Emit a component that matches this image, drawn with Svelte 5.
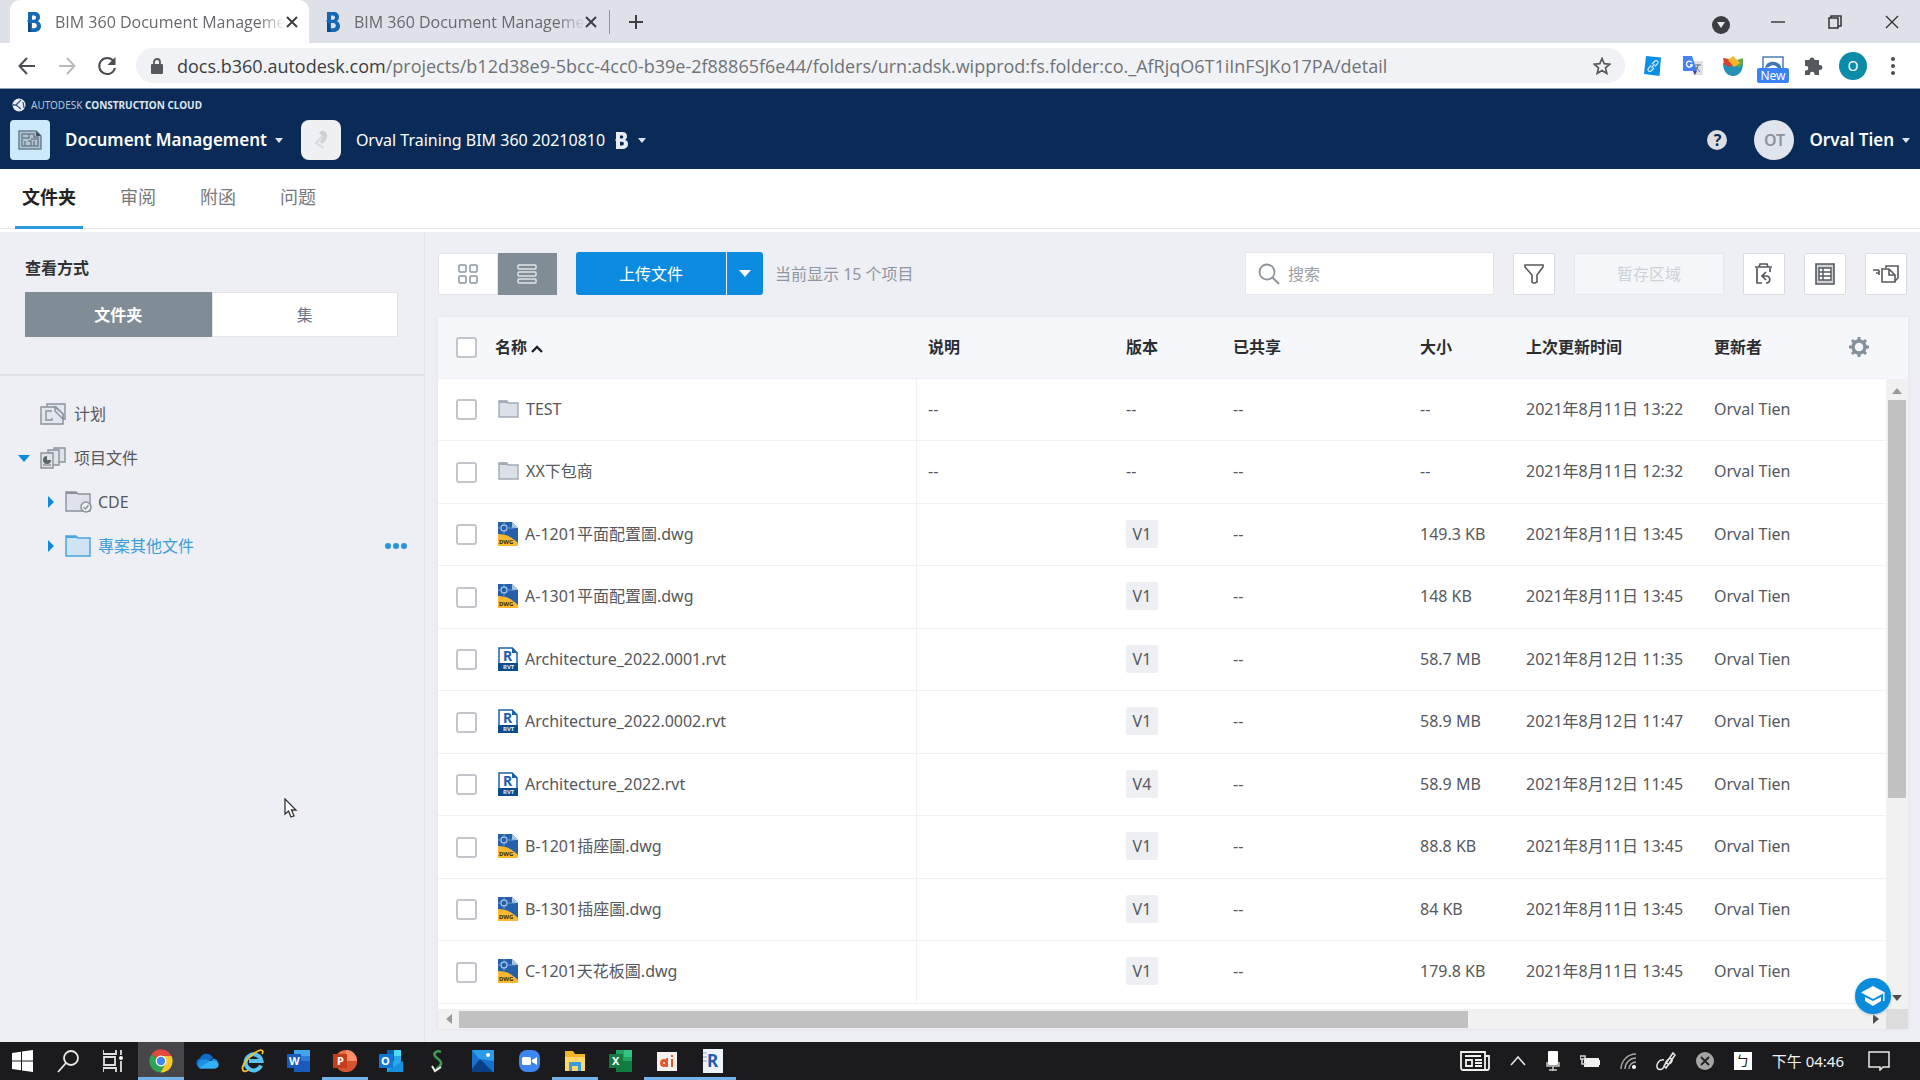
<script lang="ts">
  type Kind = 'folder' | 'dwg' | 'rvt';
  type Row = { name: string; kind: Kind; version: string; size: string; updated: string };

  const tabs = [
    { title: 'BIM 360 Document Manageme', active: true },
    { title: 'BIM 360 Document Manageme', active: false },
  ];

  const navItems = ['文件夹', '审阅', '附函', '问题'];

  const rows: Row[] = [
    { name: 'TEST', kind: 'folder', version: '', size: '--', updated: '2021年8月11日 13:22' },
    { name: 'XX下包商', kind: 'folder', version: '', size: '--', updated: '2021年8月11日 12:32' },
    { name: 'A-1201平面配置圖.dwg', kind: 'dwg', version: 'V1', size: '149.3 KB', updated: '2021年8月11日 13:45' },
    { name: 'A-1301平面配置圖.dwg', kind: 'dwg', version: 'V1', size: '148 KB', updated: '2021年8月11日 13:45' },
    { name: 'Architecture_2022.0001.rvt', kind: 'rvt', version: 'V1', size: '58.7 MB', updated: '2021年8月12日 11:35' },
    { name: 'Architecture_2022.0002.rvt', kind: 'rvt', version: 'V1', size: '58.9 MB', updated: '2021年8月12日 11:47' },
    { name: 'Architecture_2022.rvt', kind: 'rvt', version: 'V4', size: '58.9 MB', updated: '2021年8月12日 11:45' },
    { name: 'B-1201插座圖.dwg', kind: 'dwg', version: 'V1', size: '88.8 KB', updated: '2021年8月11日 13:45' },
    { name: 'B-1301插座圖.dwg', kind: 'dwg', version: 'V1', size: '84 KB', updated: '2021年8月11日 13:45' },
    { name: 'C-1201天花板圖.dwg', kind: 'dwg', version: 'V1', size: '179.8 KB', updated: '2021年8月11日 13:45' },
  ];

  const apps = [
    { id: 'start', label: 'Start' },
    { id: 'find', label: 'Search' },
    { id: 'taskview', label: 'Task view' },
    { id: 'chrome', label: 'Chrome', active: true, running: true },
    { id: 'onedrive', label: 'OneDrive' },
    { id: 'ie', label: 'Internet Explorer' },
    { id: 'word', label: 'Word' },
    { id: 'ppt', label: 'PowerPoint', running: true },
    { id: 'outlook', label: 'Outlook' },
    { id: 'snake', label: 'S' },
    { id: 'photos', label: 'Photos' },
    { id: 'zoom', label: 'Zoom' },
    { id: 'explorer', label: 'File Explorer', running: true },
    { id: 'excel', label: 'Excel' },
    { id: 'recorder', label: 'Recorder', running: true },
    { id: 'revit', label: 'Revit', running: true },
  ];

  let search = $state('');
</script>

{#snippet bimLogo()}
  <svg width="14" height="20" viewBox="0 0 14 20" aria-hidden="true">
    <path fill="#1669b0" fill-rule="evenodd" d="M1 0h6.500c3.500 0 5.500 2 5.500 5 0 2-.8 3.400-2.200 4.200C12.800 10 14 11.800 14 14c0 3.600-2.500 6-6.500 6H1V10L0 9l1-1zM5 3.500v4.300h2c1.200 0 2-.8 2-2.200S8.200 3.500 7 3.500zM5 11v5.300h2.300c1.500 0 2.500-1 2.500-2.700S8.800 11 7.300 11z" />
    <path fill="#0b4a86" d="M1 10v10h4l-1.500-3V12z" />
  </svg>
{/snippet}

{#snippet fileIcon(kind: Kind)}
  {#if kind === 'folder'}
    <svg width="21" height="20" viewBox="0 0 21 20" aria-hidden="true">
      <path d="M1 2h8l1 2h10v14H1z" fill="#dce0e8" stroke="#a3abb5" stroke-width="1.400" />
      <path d="M1 4V2h8l1 2" fill="#a3abb5" stroke="#a3abb5" />
    </svg>
  {:else if kind === 'dwg'}
    <svg width="20" height="24" viewBox="0 0 20 24" aria-hidden="true">
      <path d="M0 0h14l6 6v18H0z" fill="#2560a8" />
      <path d="M14 0v6h6z" fill="#a9c6e8" />
      <circle cx="6" cy="6" r="3" fill="none" stroke="#9dc1ea" stroke-width="1.300" />
      <path d="M6 0v3M6 9v3M0 6h3M9 6h8" stroke="#6f9cd3" />
      <path d="M0 12c8 0 14 3 20 9v3H0z" fill="#fbb831" />
      <text x="1" y="22" font-size="6" font-weight="700" fill="#3d2b05">DWG</text>
    </svg>
  {:else}
    <svg width="20" height="24" viewBox="0 0 20 24" aria-hidden="true">
      <path d="M1 1h13l5 5v17H1z" fill="#fff" stroke="#1c62ab" stroke-width="1.500" />
      <path d="M14 0v6h6z" fill="#1c62ab" />
      <text x="5" y="14" font-size="14" font-weight="700" fill="#1c5fb0">R</text>
      <path d="M0 16h20v8H0z" fill="#0b4c8e" />
      <text x="5" y="22" font-size="6" font-weight="700" fill="#dcecfb">RVT</text>
    </svg>
  {/if}
{/snippet}

{#snippet appIcon(id: string)}
  <svg width="24" height="24" viewBox="0 0 24 24" aria-hidden="true">
    {#if id === 'start'}
      <path fill="#fff" d="M1 4l9-1.300V11.500H1zM11 2.500L22 1v10.500H11zM1 12.500h9v8.800L1 20zM11 12.500h11V23l-11-1.500z" />
    {:else if id === 'find'}
      <g fill="none" stroke="#e8e8e8" stroke-width="1.800"><circle cx="14" cy="9" r="7" /><path d="M9 14l-8 9" /></g>
    {:else if id === 'taskview'}
      <g fill="none" stroke="#e0e0e0" stroke-width="1.800"><path d="M0 1v4h13V1M0 23v-4h13v4M1 8h11v8H1zM18 1v5M18 12v11" /></g>
      <circle cx="18" cy="9" r="2" fill="#fff" />
    {:else if id === 'chrome'}
      <path fill="#e3493c" d="M12 12L2.500 5.500A11.500 11.500 0 0 1 22.500 7z" />
      <path fill="#fbc72e" d="M12 12l-1-5h11.500A11.500 11.500 0 0 1 11.500 23.500z" />
      <path fill="#2fa352" d="M12 12l3.500 5-4 6.500A11.500 11.500 0 0 1 2.500 5.500z" />
      <circle cx="12" cy="12" r="5.400" fill="#fff" /><circle cx="12" cy="12" r="4.200" fill="#4187ef" />
    {:else if id === 'onedrive'}
      <path fill="#0f6cc4" d="M6 19a5 5 0 0 1-1-9.800A7 7 0 0 1 18 9z" />
      <path fill="#1f90e8" d="M5 19.500a5 5 0 0 1 3-9c3-1 6 1 8 2l2-3c7 1 7 10 1 10z" />
      <path fill="#33b1f5" d="M4 19l11-7c5-1 9 1 8.500 4.500-.5 2-2 3-4 3H6z" />
    {:else if id === 'ie'}
      <path d="M20 16.500A8 8 0 1 1 20.500 12H8" fill="none" stroke="#55c3f3" stroke-width="4" />
      <path d="M21 5c2-3 0-5-4-3C9 6 2 14 1.500 19c-.3 4 3 4 6 2" fill="none" stroke="#f3c02f" stroke-width="1.800" />
    {:else if id === 'word'}
      <path fill="#2b7cd3" d="M7 1h16v22H7z" /><path fill="#195abd" d="M7 12h16v11H7z" /><path fill="#41a5ee" d="M7 1h16v6H7z" />
      <path fill="#185abd" d="M0 5h14v14H0z" /><text x="2" y="16" font-size="11" font-weight="700" fill="#fff">W</text>
    {:else if id === 'ppt'}
      <circle cx="13" cy="12" r="11" fill="#ed6c47" /><path fill="#ff8f6b" d="M13 1a11 11 0 0 1 11 11H13z" />
      <path fill="#d35230" d="M2 12h22a11 11 0 0 1-20 6z" /><path fill="#c43e1c" d="M0 5h14v14H0z" /><text x="4" y="16" font-size="11" font-weight="700" fill="#fff">P</text>
    {:else if id === 'outlook'}
      <path fill="#28a8ea" d="M8 1h14v22H8z" /><path fill="#0364b8" d="M8 1h7v11H8z" /><path fill="#50d9ff" d="M15 1h7v6h-7z" />
      <path fill="#1490df" d="M7 23l17-11v11z" /><path fill="#0f78d4" d="M0 5h14v14H0z" /><text x="2" y="16" font-size="11" font-weight="700" fill="#fff">O</text>
    {:else if id === 'snake'}
      <path d="M16 3c-4-2-8 1-6 4s7 4 6 8c-1 3-3 4-5 5" fill="none" stroke="#3d9a54" stroke-width="2.500" />
      <path d="M7 17l3 5 6-4" fill="none" stroke="#e9efe9" stroke-width="2" />
    {:else if id === 'photos'}
      <path fill="#1471cf" d="M1 1h22v22H1z" /><path fill="#2b9bea" d="M1 1h22v11L8 10z" />
      <path fill="#0a3f84" d="M1 20l8-10 13 13H1z" /><circle cx="17" cy="6" r="2" fill="#fff" />
    {:else if id === 'zoom'}
      <rect x="2" y="1" width="21" height="22" rx="8" fill="#3c86f4" />
      <rect x="5" y="8" width="9" height="8" rx="1.500" fill="#fff" /><path fill="#fff" d="M15 11l5-3v8l-5-3z" />
    {:else if id === 'explorer'}
      <path fill="#f0b52d" d="M2 2h8l2 3h10v6H2z" /><path fill="#ffd867" d="M2 8h20v14H2z" />
      <path fill="#3b9be0" d="M6 13h12v9h-3v-5H9v5H6z" />
    {:else if id === 'excel'}
      <path fill="#21a366" d="M7 1h16v22H7z" /><path fill="#33c481" d="M15 1h8v7h-8z" /><path fill="#107c41" d="M7 12h16v11H7z" />
      <path fill="#107c41" d="M0 5h14v14H0z" /><text x="3" y="16" font-size="11" font-weight="700" fill="#fff">X</text>
    {:else if id === 'recorder'}
      <path fill="#f5f1ee" d="M2 3h20v19H2z" /><circle cx="9" cy="14" r="4" fill="#e4592b" />
      <path fill="#e4592b" d="M11 9h2v9h-2zM16 10h2v8h-2zM16 6h2v2h-2z" /><circle cx="9" cy="14" r="1" fill="#f5f1ee" />
    {:else}
      <path fill="#eef3fa" d="M2 0h20v24H2z" /><text x="6" y="18" font-size="17" font-weight="700" fill="#1e5fae">R</text>
      <path d="M2 4h4M2 8h4M2 12h4" stroke="#88a9cf" />
    {/if}
  </svg>
{/snippet}

<div class="screen">
  <div class="tabstrip">
    {#each tabs as tab}
      <div class="tab" class:active={tab.active}>
        {@render bimLogo()}
        <span class="tab-title">{tab.title}</span>
        <button class="plain" aria-label="Close tab">
          <svg width="12" height="12" viewBox="0 0 12 12"><path d="M1 1l10 10M11 1L1 11" stroke="#3c4043" stroke-width="2" /></svg>
        </button>
      </div>
    {/each}
    <span class="tab-sep"></span>
    <button class="plain new-tab" aria-label="New tab">
      <svg width="16" height="16" viewBox="0 0 16 16"><path d="M8 1v14M1 8h14" stroke="#3c4043" stroke-width="2" /></svg>
    </button>
    <div class="window-buttons">
      <button class="plain" aria-label="Tab search">
        <svg width="18" height="24" viewBox="0 0 18 24"><circle cx="9" cy="15" r="9" fill="#3a3d41" /><path d="M5 12h8l-4 6z" fill="#e6e8ec" /></svg>
      </button>
      <button class="plain" aria-label="Minimize">
        <svg width="14" height="14" viewBox="0 0 14 14"><path d="M0 7h14" stroke="#333" stroke-width="1.400" /></svg>
      </button>
      <button class="plain" aria-label="Restore">
        <svg width="14" height="14" viewBox="0 0 14 14"><path d="M1 3h9v10H1zM3 3V1h10v10h-3" fill="none" stroke="#333" stroke-width="1.500" /></svg>
      </button>
      <button class="plain" aria-label="Close">
        <svg width="14" height="14" viewBox="0 0 14 14"><path d="M1 1l12 12M13 1L1 13" stroke="#333" stroke-width="1.400" /></svg>
      </button>
    </div>
  </div>

  <div class="browserbar">
    <button class="plain nav-btn" aria-label="Back">
      <svg width="18" height="18" viewBox="0 0 18 18"><path d="M17 9H2M9 1L1.500 9 9 17" fill="none" stroke="#4a4d51" stroke-width="2" /></svg>
    </button>
    <button class="plain nav-btn" aria-label="Forward">
      <svg width="18" height="18" viewBox="0 0 18 18"><path d="M1 9h15M9 1l7.500 8L9 17" fill="none" stroke="#b9bbbe" stroke-width="2" /></svg>
    </button>
    <button class="plain nav-btn" aria-label="Reload">
      <svg width="20" height="20" viewBox="0 0 20 20"><path d="M16.500 5A8 8 0 1 0 18 12" fill="none" stroke="#4a4d51" stroke-width="2" /><path d="M18.500 1v8h-8z" fill="#4a4d51" /></svg>
    </button>
    <div class="omnibox">
      <svg width="12" height="16" viewBox="0 0 12 16" aria-hidden="true"><path d="M1 6h10a1 1 0 0 1 1 1v8a1 1 0 0 1-1 1H1a1 1 0 0 1-1-1V7a1 1 0 0 1 1-1z" fill="#55585c" /><path d="M3 7V4a3 3 0 0 1 6 0v3" fill="none" stroke="#55585c" stroke-width="1.800" /></svg>
      <span class="url"><b>docs.b360.autodesk.com</b>/projects/b12d38e9-5bcc-4cc0-b39e-2f88865f6e44/folders/urn:adsk.wipprod:fs.folder:co._AfRjqO6T1iInFSJKo17PA/detail</span>
      <button class="plain" aria-label="Bookmark">
        <svg width="18" height="18" viewBox="0 0 18 18"><path d="M9 1.500l2.200 5.200 5.600.5-4.300 3.700 1.300 5.500L9 13.500l-4.800 2.900 1.300-5.500L1.200 7.200l5.600-.5z" fill="none" stroke="#55585c" stroke-width="1.700" /></svg>
      </button>
    </div>
    <div class="extensions">
      <svg class="ext" width="18" height="20" viewBox="0 0 18 20"><path d="M2 0l15 1.500L15.500 20 0 18z" fill="#0c8ee6" /><path d="M8 8l3-3c2-1.300 4 .7 2.600 2.700l-3 3M10 12l-3 3c-2 1.300-4-.7-2.600-2.700l3-3M7.500 12l3-4" fill="none" stroke="#d9eefb" stroke-width="1.200" /></svg>
      <svg class="ext" width="20" height="20" viewBox="0 0 20 20"><path d="M8 5h12v14H10z" fill="#dfe1e5" /><path d="M0 0h9l5 15H1a1 1 0 0 1-1-1z" fill="#4382f0" /><path d="M10 15h4l-2 4z" fill="#5136a8" /><path d="M12 9h6M15 8v1c0 3-2 5-3 6M13 11l4 5" stroke="#6e7175" fill="none" /><path d="M9 6.500A3 3 0 1 0 9.300 9H7" fill="none" stroke="#fff" stroke-width="1.300" /></svg>
      <svg class="ext" width="20" height="20" viewBox="0 0 20 20"><path d="M0 7h20c0 8-4 13-10 13S0 15 0 7z" fill="#2790b5" /><path d="M0 2l6 1 4 6-4 2-5-3z" fill="#d5422d" /><path d="M20 2l-6 2-3 6 6 1 3-4z" fill="#67a94b" /><path d="M5 4l5-4 5 5 2 2-6 4z" fill="#fbb52b" /></svg>
      <div class="ext ext-new">
        <svg width="22" height="12" viewBox="0 0 22 12"><path d="M1 1h20v12H1z" fill="#fff" stroke="#4b7fb8" stroke-width="1.500" /><path d="M3 12c1-5 5-7 10-6 4 1 6 3 6 6h-3c-2-3-6-4-9-1z" fill="#3d76b3" /></svg>
        <span>New</span>
      </div>
      <svg class="ext" width="20" height="20" viewBox="0 0 20 20"><path d="M2 4h4.500a2.500 2.500 0 1 1 5 0H16v5h1a2.500 2.500 0 0 1 0 5h-1v5h-4.500v-1a2.300 2.300 0 0 0-4.600 0v1H2v-4.500h1a2.300 2.300 0 0 0 0-4.600H2z" fill="#55585c" /></svg>
      <span class="ext profile">O</span>
      <svg class="ext" width="4" height="18" viewBox="0 0 4 18"><circle cx="2" cy="2" r="2" fill="#4a4d51" /><circle cx="2" cy="9" r="2" fill="#4a4d51" /><circle cx="2" cy="16" r="2" fill="#4a4d51" /></svg>
    </div>
  </div>

  <header class="app-header">
    <div class="brand">
      <svg width="14" height="14" viewBox="0 0 14 14" aria-hidden="true"><circle cx="7" cy="7" r="6.500" fill="#e9eef6" /><path d="M9 2L4 7l5 4M4 7H1M11 4l1 6" fill="none" stroke="#39547f" stroke-width="1.300" /></svg>
      <span>AUTODESK <b>CONSTRUCTION CLOUD</b></span>
    </div>
    <div class="header-row">
      <span class="module">
        <svg width="24" height="20" viewBox="0 0 24 20" aria-hidden="true"><path d="M1 1h17l5 5v13H1z" fill="#b3c4d1" stroke="#6c8090" stroke-width="1.500" /><path d="M4 4h12v3h4v9H4zM4 8h7V4M7 11v5M10 11h3v5M16 11v5M13 9h6" fill="none" stroke="#6c8090" stroke-width="1.500" /><path d="M18 1v5h5z" fill="#3f4f5d" /></svg>
      </span>
      <button class="plain switcher strong">Document Management <i class="caret"></i></button>
      <span class="project-img">
        <svg width="24" height="24" viewBox="0 0 24 24" aria-hidden="true"><path d="M10 5c3-4 8-2 8 3 0 3-2 6-5 8l-2-2 3-5z" fill="#d0d1d4" /><path d="M12 8l-7 7 9 6 1-2-6-4 5-6z" fill="#dcdcdf" /></svg>
      </span>
      <button class="plain switcher project">Orval Training BIM 360 20210810
        <svg width="13" height="17" viewBox="0 0 13 17" aria-hidden="true"><path fill="#e9edf3" fill-rule="evenodd" d="M1 0h6c3.300 0 5 1.600 5 4.200 0 1.600-.7 2.900-2 3.600 2 .7 3 2.200 3 4.200 0 3.200-2.300 5-6 5H1V9L0 8l1-1zM5 3.500v3h1.700c1 0 1.600-.6 1.600-1.500s-.6-1.500-1.600-1.500zM5 9.700v3.800h2c1.200 0 1.900-.7 1.900-1.900S8.200 9.700 7 9.700z" /></svg>
        <i class="caret"></i>
      </button>
      <div class="account">
        <button class="plain help" aria-label="Help">?</button>
        <span class="initials">OT</span>
        <button class="plain switcher strong">Orval Tien <i class="caret"></i></button>
      </div>
    </div>
  </header>

  <nav class="module-nav">
    {#each navItems as item, i}
      <a href="#{i}" class:current={i === 0}>{item}</a>
    {/each}
  </nav>

  <div class="content">
    <aside class="sidebar">
      <div class="view-by">
        <h2>查看方式</h2>
        <div class="segmented">
          <button class="on">文件夹</button>
          <button>集</button>
        </div>
      </div>
      <ul class="tree">
        <li>
          <span class="arrow"></span>
          <svg width="26" height="22" viewBox="0 0 26 22" aria-hidden="true"><g fill="#e3e6ed" stroke="#8b929a" stroke-width="1.400"><path d="M7 4V1h18v15h-2" /><path d="M1 4h15l7 7v10H1z" /><path d="M12 8H6v9h6v-2" fill="none" /><path d="M15 4v4l8 8v-5z" /></g></svg>
          计划
        </li>
        <li>
          <span class="arrow"><svg width="12" height="8" viewBox="0 0 12 8"><path d="M0 1h12L6 8z" fill="#0a8bdc" /></svg></span>
          <svg width="26" height="22" viewBox="0 0 26 22" aria-hidden="true"><g fill="#dfe2e7" stroke="#8b929a" stroke-width="1.400"><path d="M14 1h11v14h-8V5h-3z" /><path d="M8 3h11v15h-7V6H8z" /><path d="M1 6h12v15H1z" /></g><path d="M3 18h8" stroke="#6c747c" /><path d="M7 9v4h4a4 4 0 1 1-4-4z" fill="#5c646c" /></svg>
          项目文件
        </li>
        <li class="child">
          <span class="arrow"><svg width="8" height="12" viewBox="0 0 8 12"><path d="M1 0v12l6-6z" fill="#0a8bdc" /></svg></span>
          <svg width="28" height="22" viewBox="0 0 28 22" aria-hidden="true"><path d="M1 1h10l2 2h12v17H1z" fill="#dfe2ea" stroke="#8b929a" stroke-width="1.400" /><path d="M1 3V1h10l2 2" fill="#8b929a" /><circle cx="21" cy="16" r="5" fill="#eef0f4" stroke="#8b929a" stroke-width="1.500" /><path d="M18.500 16l2 2 3-4" fill="none" stroke="#8b929a" stroke-width="1.400" /></svg>
          CDE
        </li>
        <li class="child selected">
          <span class="arrow"><svg width="8" height="12" viewBox="0 0 8 12"><path d="M1 0v12l6-6z" fill="#0a8bdc" /></svg></span>
          <svg width="28" height="22" viewBox="0 0 28 22" aria-hidden="true"><path d="M1 1h10l2 2h12v18H1z" fill="#cfe3f4" stroke="#48a6dd" stroke-width="1.500" /><path d="M1 3V1h10l2 2" fill="#48a6dd" /></svg>
          專案其他文件
          <button class="plain more" aria-label="More">
            <svg width="22" height="6" viewBox="0 0 22 6"><circle cx="3" cy="3" r="3" fill="#2a95da" /><circle cx="11" cy="3" r="3" fill="#2a95da" /><circle cx="19" cy="3" r="3" fill="#2a95da" /></svg>
          </button>
        </li>
      </ul>
    </aside>

    <main>
      <div class="toolbar">
        <div class="view-toggle">
          <button aria-label="Grid view">
            <svg width="20" height="20" viewBox="0 0 20 20"><g fill="none" stroke="#8b959e" stroke-width="1.500"><rect x="1" y="1" width="7" height="7" rx="1" /><rect x="12" y="1" width="7" height="7" rx="1" /><rect x="1" y="12" width="7" height="7" rx="1" /><rect x="12" y="12" width="7" height="7" rx="1" /></g></svg>
          </button>
          <button class="on" aria-label="List view">
            <svg width="20" height="20" viewBox="0 0 20 20"><g fill="none" stroke="#dfe4e8" stroke-width="1.500"><rect x="1" y="1" width="18" height="4" rx="1" /><rect x="1" y="8" width="18" height="4" rx="1" /><rect x="1" y="15" width="18" height="4" rx="1" /></g></svg>
          </button>
        </div>
        <div class="upload">
          <button>上传文件</button>
          <button class="drop" aria-label="Upload options"><svg width="12" height="7" viewBox="0 0 12 7"><path d="M0 0h12L6 7z" fill="#fff" /></svg></button>
        </div>
        <span class="count">当前显示 15 个项目</span>
        <label class="search">
          <svg width="22" height="22" viewBox="0 0 22 22" aria-hidden="true"><circle cx="9" cy="9" r="7.500" fill="none" stroke="#8e959c" stroke-width="1.800" /><path d="M14 14l7 7" stroke="#8e959c" stroke-width="2" /></svg>
          <input type="text" placeholder="搜索" aria-label="搜索" bind:value={search} />
        </label>
        <button class="tool" aria-label="Filter">
          <svg width="20" height="20" viewBox="0 0 20 20"><path d="M1 1h18v2l-6 8v7l-2 1H9l-1-1v-7L1 3z" fill="none" stroke="#55595e" stroke-width="1.600" /></svg>
        </button>
        <button class="staging" disabled>暂存区域</button>
        <button class="tool" aria-label="Deleted items">
          <svg width="20" height="22" viewBox="0 0 20 22"><g fill="none" stroke="#55595e" stroke-width="1.700"><path d="M1 4h17M5 4l1-3h7l1 3M3 5v15h5M16 5v4" /><path d="M12 9l-4 4 4 4M8 13h4c5 0 5 7 0 7" /></g></svg>
        </button>
        <button class="tool" aria-label="Reports">
          <svg width="20" height="22" viewBox="0 0 20 22"><path d="M1 1h18v20H1z" fill="#cfd2d6" stroke="#55595e" stroke-width="1.600" /><path d="M4 5h12v12H4zM8 5v12M4 9h12M4 13h12" fill="#fff" stroke="#55595e" stroke-width="1.400" /></svg>
        </button>
        <button class="tool" aria-label="Transmittals">
          <svg width="26" height="20" viewBox="0 0 26 20"><g fill="none" stroke="#55595e" stroke-width="1.600"><path d="M0 6h6M3 9h3M6 6v5M13 4V2h12v12l-3 3" /><path d="M9 5h7l6 6v7H9z" fill="#fff" /><path d="M16 5v6h6" /></g></svg>
        </button>
      </div>

      <div class="panel">
        <div class="panel-body">
          <table>
            <thead>
              <tr>
                <th class="c-check"><input type="checkbox" aria-label="Select all" /></th>
                <th class="c-name">名称 <svg width="12" height="8" viewBox="0 0 12 8" aria-hidden="true"><path d="M1 7l5-5 5 5" fill="none" stroke="#222" stroke-width="2.400" /></svg></th>
                <th class="c-desc">说明</th>
                <th class="c-version">版本</th>
                <th class="c-shared">已共享</th>
                <th class="c-size">大小</th>
                <th class="c-updated">上次更新时间</th>
                <th class="c-by">更新者</th>
                <th class="c-gear">
                  <button class="plain" aria-label="Columns">
                    <svg width="20" height="20" viewBox="0 0 20 20"><circle cx="10" cy="10" r="6" fill="none" stroke="#84909a" stroke-width="3.400" /><path d="M10 0v4M10 16v4M0 10h4M16 10h4M3 3l3 3M14 14l3 3M17 3l-3 3M6 14l-3 3" stroke="#84909a" stroke-width="3" /></svg>
                  </button>
                </th>
              </tr>
            </thead>
            <tbody>
              {#each rows as row}
                <tr>
                  <td class="c-check"><input type="checkbox" aria-label={row.name} /></td>
                  <td class="c-name"><span class="file">{@render fileIcon(row.kind)}{row.name}</span></td>
                  <td class="c-desc">{row.kind === 'folder' ? '--' : ''}</td>
                  <td>{#if row.version}<span class="badge">{row.version}</span>{:else}--{/if}</td>
                  <td>--</td>
                  <td>{row.size}</td>
                  <td>{row.updated}</td>
                  <td>Orval Tien</td>
                  <td></td>
                </tr>
              {/each}
            </tbody>
          </table>
          <div class="side">
            <div class="side-head"></div>
            <div class="vbar">
              <svg width="10" height="6" viewBox="0 0 10 6"><path d="M0 6h10L5 0z" fill="#9b9b9b" /></svg>
              <div class="vthumb"></div>
              <svg width="10" height="6" viewBox="0 0 10 6"><path d="M0 0h10L5 6z" fill="#505050" /></svg>
            </div>
          </div>
        </div>
        <div class="hbar">
          <svg width="6" height="10" viewBox="0 0 6 10"><path d="M6 0v10L0 5z" fill="#9b9b9b" /></svg>
          <div class="hthumb"></div>
          <svg width="6" height="10" viewBox="0 0 6 10"><path d="M0 0v10l6-5z" fill="#505050" /></svg>
          <span class="corner"></span>
        </div>
        <button class="plain learn" aria-label="Learning">
          <svg width="24" height="22" viewBox="0 0 24 22"><path d="M12 1l12 6.500L12 14 0 7.500z" fill="#fff" /><path d="M4 12l8 4 8-4v4l-8 5-8-5zM22 8h1.500v8H22z" fill="#fff" /></svg>
        </button>
      </div>
    </main>

    <svg class="pointer" width="14" height="20" viewBox="0 0 14 20" aria-hidden="true"><path d="M1 1v15l3.500-3 2.500 6 3-1.200L7.500 12H12z" fill="#fff" stroke="#333" stroke-width="1.300" /></svg>
  </div>

  <footer class="taskbar">
    {#each apps as app}
      <button class="plain task" class:active={app.active} class:running={app.running} aria-label={app.label}>{@render appIcon(app.id)}</button>
    {/each}
    <div class="tray">
      <svg width="30" height="20" viewBox="0 0 30 20"><g fill="none" stroke="#f1f1f1" stroke-width="1.800"><path d="M1 1h24v18H3a2 2 0 0 1-2-2zM25 5h4v12a2 2 0 0 1-2 2h-3M5 5h16M15 9h7M15 12h7M15 15h7" /><path d="M6 9h6v6H6z" /></g></svg>
      <svg width="16" height="10" viewBox="0 0 16 10"><path d="M1 9l7-8 7 8" fill="none" stroke="#e4e4e4" stroke-width="1.600" /></svg>
      <svg width="14" height="20" viewBox="0 0 14 20"><rect x="2" y="0" width="10" height="14" rx="1" fill="#fff" /><path d="M1 11v4h12v-4M7 15v5M3 19h8" fill="none" stroke="#c8c8c8" stroke-width="1.500" /></svg>
      <svg width="20" height="14" viewBox="0 0 20 14"><path d="M4 4h15v9H4zM19 6h1v5h-1z" fill="#f0f0f0" /><path d="M0 2h5v3H0zM2 5v5h4" fill="none" stroke="#d8d8d8" stroke-width="1.500" /></svg>
      <svg width="16" height="18" viewBox="0 0 16 18"><g fill="none" stroke="#a8a8a8" stroke-width="1.400"><path d="M1 17A15 15 0 0 1 16 2M5 17A11 11 0 0 1 16 6M9 17a7 7 0 0 1 7-7" /></g><circle cx="14" cy="15" r="2" fill="#fff" /></svg>
      <svg width="20" height="20" viewBox="0 0 20 20"><path d="M8 15L17 2l2 2-9 13zM8 9c-5-1-9 5-6 9 5 2 6-2 8-7 3-5 7-4 6-1s-4 4-5 2" fill="none" stroke="#e8e8e8" stroke-width="1.500" /></svg>
      <svg width="18" height="18" viewBox="0 0 18 18"><circle cx="9" cy="9" r="9" fill="#a5a5a5" /><path d="M5 5l8 8M13 5l-8 8" stroke="#222" stroke-width="1.800" /></svg>
      <span class="ime">ㄅ</span>
      <time>下午 04:46</time>
      <svg class="notice" width="22" height="20" viewBox="0 0 22 20"><path d="M1 1h20v15h-6l-3 3v-3H1z" fill="none" stroke="#eaeaea" stroke-width="1.500" /></svg>
    </div>
  </footer>
</div>

<style>
  :global(body) {
    margin: 0;
    background: #eeeff4;
  }

  .screen {
    display: flex;
    flex-direction: column;
    min-height: 100vh;
    font-family: 'Noto Sans', 'Noto Sans CJK SC', sans-serif;
    font-size: 16px;
    line-height: 24px;
    color: #55585c;
  }

  .screen * {
    box-sizing: border-box;
  }

  svg {
    flex: none;
    display: block;
  }

  button {
    font: inherit;
    color: inherit;
    cursor: pointer;
  }

  .plain {
    display: flex;
    align-items: center;
    justify-content: center;
    padding: 0;
    border: 0;
    background: none;
  }

  /* browser chrome */
  .tabstrip {
    display: flex;
    align-items: center;
    height: 43px;
    padding-left: 10px;
    background: #dee1e8;
    font-family: 'Open Sans', sans-serif;
  }

  .tab {
    display: flex;
    align-items: center;
    width: 299px;
    height: 43px;
    padding: 0 12px 0 17px;
    color: #66696d;
  }

  .tab.active {
    border-radius: 10px 10px 0 0;
    background: #fff;
  }

  .tab-title {
    margin: 0 auto 0 14px;
    white-space: nowrap;
    mask-image: linear-gradient(90deg, #000 88%, transparent);
  }

  .tab-sep {
    width: 1px;
    height: 24px;
    margin-left: 1px;
    background: #8f9297;
  }

  .new-tab {
    width: 52px;
  }

  .window-buttons {
    display: flex;
    height: 36px;
    margin-left: auto;
  }

  .window-buttons button {
    width: 57px;
  }

  .browserbar {
    display: flex;
    align-items: center;
    height: 46px;
    padding: 0 7px;
    border-bottom: 1px solid #8f9bb0;
    background: #fff;
  }

  .nav-btn {
    width: 40px;
  }

  .omnibox {
    display: flex;
    flex: 1;
    align-items: center;
    height: 35px;
    margin: 0 8px 0 9px;
    padding: 0 14px 0 15px;
    gap: 14px;
    border-radius: 18px;
    background: #f1f2f5;
    font-family: 'Open Sans', sans-serif;
    font-size: 18px;
  }

  .url {
    flex: 1;
    color: #6f7276;
    white-space: nowrap;
  }

  .url b {
    font-weight: 400;
    color: #3a3d41;
  }

  .extensions {
    display: grid;
    grid-template-columns: repeat(7, 40px);
    align-items: center;
    justify-items: center;
  }

  .ext-new {
    display: flex;
    flex-direction: column;
    align-items: center;
    margin-top: 8px;
  }

  .ext-new span {
    padding: 0 3px;
    border-radius: 2px;
    background: #3b82f6;
    color: #fff;
    font-size: 12px;
    line-height: 15px;
  }

  .profile {
    width: 28px;
    height: 28px;
    border-radius: 50%;
    background: #0a8ba8;
    color: #fff;
    font-size: 14px;
    line-height: 28px;
    text-align: center;
  }

  /* application header */
  .app-header {
    height: 80px;
    padding: 8px 10px 0;
    background: #0a2b57;
    color: #fff;
  }

  .brand {
    display: flex;
    align-items: center;
    height: 16px;
    padding-left: 2px;
    gap: 5px;
    color: #b9c5d8;
    font-size: 10px;
  }

  .brand b {
    color: #dfe6f0;
  }

  .header-row {
    display: flex;
    align-items: center;
    height: 40px;
    margin-top: 7px;
  }

  .module,
  .project-img {
    display: flex;
    align-items: center;
    justify-content: center;
    width: 40px;
    height: 40px;
    border-radius: 4px;
    background: #cdeafb;
  }

  .project-img {
    margin-left: 18px;
    border-radius: 8px;
    background: #eff0f2;
  }

  .switcher {
    margin-left: 15px;
    gap: 8px;
    white-space: nowrap;
  }

  .project {
    gap: 10px;
  }

  .strong {
    font-size: 17px;
    font-weight: 600;
  }

  .caret {
    border: 4px solid transparent;
    border-top: 5px solid #dce3ee;
    border-bottom: 0;
  }

  .account {
    display: flex;
    align-items: center;
    margin-left: auto;
  }

  .help {
    width: 20px;
    height: 20px;
    border-radius: 50%;
    background: #dcdee2;
    color: #0a2b57;
    font-weight: 700;
  }

  .initials {
    width: 40px;
    height: 40px;
    margin-left: 27px;
    border-radius: 50%;
    background: #dfe4ed;
    color: #8c9299;
    font-weight: 600;
    line-height: 40px;
    text-align: center;
  }

  .module-nav {
    display: flex;
    height: 63px;
    padding-left: 15px;
    gap: 30px;
    border-bottom: 3px solid #fff;
    background: #fff;
    box-shadow: inset 0 -1px #e6e7ea;
    font-size: 18px;
  }

  .module-nav a {
    height: 60px;
    padding: 16px 7px 0;
    border-bottom: 3px solid transparent;
    color: #77797d;
    text-decoration: none;
  }

  .module-nav a.current {
    border-color: #2a9ada;
    color: #222;
    font-weight: 700;
  }

  .content {
    display: flex;
    flex: 1;
    position: relative;
    background: #eeeff4;
  }

  .sidebar {
    width: 425px;
    border-right: 1px solid #e2e4e9;
  }

  .view-by {
    height: 144px;
    padding: 24px 26px 0 25px;
    border-bottom: 2px solid #dfe1e6;
  }

  h2 {
    margin: 0 0 12px;
    color: #2f3135;
    font-size: 16px;
    font-weight: 700;
  }

  .segmented,
  .view-toggle {
    display: grid;
    grid-template-columns: 1fr 1fr;
    height: 45px;
  }

  .segmented button,
  .view-toggle button {
    display: flex;
    align-items: center;
    justify-content: center;
    padding: 0;
    border: 1px solid #e3e5ea;
    background: #fff;
    color: #6d7684;
  }

  .segmented .on,
  .view-toggle .on {
    border-color: #808d97;
    background: #808d97;
    color: #fff;
    font-weight: 700;
  }

  .tree {
    margin: 0;
    padding: 16px 17px 0 15px;
    list-style: none;
  }

  .tree li {
    display: flex;
    align-items: center;
    height: 44px;
    gap: 8px;
  }

  .tree .child {
    padding-left: 26px;
    gap: 5px;
  }

  .tree .child .arrow {
    width: 19px;
  }

  .tree .arrow {
    display: flex;
    justify-content: center;
    width: 17px;
  }

  .tree .selected {
    color: #3a9edb;
  }

  .more {
    margin-left: auto;
  }

  main {
    flex: 1;
    min-width: 0;
    padding: 20px 12px 0 13px;
  }

  .toolbar {
    display: flex;
    align-items: center;
    height: 43px;
    padding-right: 1px;
    gap: 19px;
  }

  .view-toggle {
    width: 119px;
    height: 42px;
  }

  .upload {
    display: flex;
    height: 43px;
    gap: 1px;
  }

  .upload button {
    width: 150px;
    border: 0;
    border-radius: 3px 0 0 3px;
    background: #0a8bdf;
    color: #fff;
  }

  .upload .drop {
    display: flex;
    align-items: center;
    justify-content: center;
    width: 36px;
    border-radius: 0 3px 3px 0;
  }

  .count {
    margin-left: -7px;
    color: #8f96a1;
  }

  .search {
    display: flex;
    align-items: center;
    width: 249px;
    height: 43px;
    margin-left: auto;
    padding: 0 12px;
    gap: 8px;
    border: 1px solid #e4e6ea;
    background: #fff;
  }

  .search input {
    flex: 1;
    min-width: 0;
    padding: 0;
    border: 0;
    outline: 0;
    background: none;
    font: inherit;
    color: #55585c;
  }

  .search input::placeholder {
    color: #9b9fa5;
  }

  .tool {
    display: flex;
    align-items: center;
    justify-content: center;
    width: 42px;
    height: 42px;
    padding: 0;
    border: 1px solid #d9dce1;
    border-radius: 2px;
    background: #fff;
  }

  .staging {
    width: 150px;
    height: 42px;
    border: 1px solid #e6e8ed;
    background: #f4f6fa;
    color: #ced2d7;
  }

  .panel {
    position: relative;
    margin-top: 22px;
    background: #fff;
    box-shadow: 0 0 4px #dfe1e7;
  }

  .panel-body {
    display: flex;
    padding-bottom: 5px;
  }

  .side {
    display: flex;
    flex-direction: column;
    width: 22px;
    margin-bottom: -5px;
  }

  .side-head {
    height: 62px;
    background: #f6f7fb;
  }

  .vbar {
    display: flex;
    flex: 1;
    flex-direction: column;
    align-items: center;
    padding: 9px 0 8px;
    background: #f1f1f2;
  }

  .vbar svg:last-child {
    margin-top: auto;
  }

  .vthumb {
    width: 18px;
    height: 65%;
    margin-top: 6px;
    background: #c1c1c2;
  }

  .hbar {
    display: flex;
    align-items: center;
    height: 20px;
    padding-left: 8px;
    background: #f1f1f2;
  }

  .hthumb {
    width: 69%;
    height: 17px;
    margin: 0 auto 0 7px;
    background: #c1c1c2;
  }

  .corner {
    width: 22px;
    height: 20px;
    margin-left: 7px;
    background: #dcdcdd;
  }

  .learn {
    position: absolute;
    right: 17px;
    bottom: 15px;
    width: 36px;
    height: 36px;
    border-radius: 50%;
    background: #0a8bdc;
    box-shadow: 0 1px 3px #b5c4d0;
  }

  table {
    flex: 1;
    width: 100%;
    border-spacing: 0;
    table-layout: fixed;
  }

  th,
  td {
    padding: 0 0 2px;
    text-align: left;
    white-space: nowrap;
  }

  th {
    height: 62px;
    border-bottom: 1px solid #eceef3;
    background: #f6f7fb;
    color: #2b2d31;
    font-weight: 700;
  }

  td {
    height: 62px;
    border-bottom: 1px solid #eff1f5;
  }

  tr:nth-child(even) td {
    height: 63px;
  }

  .c-check {
    width: 57px;
    padding: 0 0 0 18px;
  }

  .c-check input {
    display: block;
    appearance: none;
    width: 21px;
    height: 21px;
    margin: 0;
    border: 2px solid #c2c5ca;
    border-radius: 3px;
    background: #fff;
  }

  .c-name svg {
    display: inline-block;
  }

  td.c-name {
    border-right: 1px solid #eff1f5;
  }

  .c-desc {
    width: 209px;
    padding-left: 11px;
  }

  .c-version {
    width: 107px;
  }

  .c-shared {
    width: 187px;
  }

  .c-size {
    width: 106px;
  }

  .c-updated {
    width: 188px;
  }

  .c-by {
    width: 135px;
  }

  .c-gear {
    width: 37px;
  }

  .file {
    display: flex;
    align-items: center;
    padding-left: 3px;
    gap: 7px;
  }

  .badge {
    display: block;
    width: 32px;
    border-radius: 2px;
    background: #eeeff2;
    line-height: 28px;
    text-align: center;
  }

  .pointer {
    position: absolute;
    left: 284px;
    top: 566px;
  }

  /* windows taskbar */
  .taskbar {
    display: flex;
    height: 38px;
    background: #1b1b1d;
    color: #f2f2f2;
  }

  .task {
    width: 46px;
    padding-top: 3px;
    border-bottom: 3px solid transparent;
  }

  .task.active {
    background: #474749;
  }

  .task.running {
    border-color: #76b2ea;
  }

  .tray {
    display: flex;
    align-items: center;
    margin-left: auto;
    padding-right: 30px;
    gap: 20px;
  }

  .tray time {
    font-size: 15px;
  }

  .notice {
    margin-left: 4px;
  }

  .ime {
    width: 18px;
    background: #fff;
    color: #222;
    font-size: 14px;
    line-height: 18px;
    text-align: center;
  }
</style>
